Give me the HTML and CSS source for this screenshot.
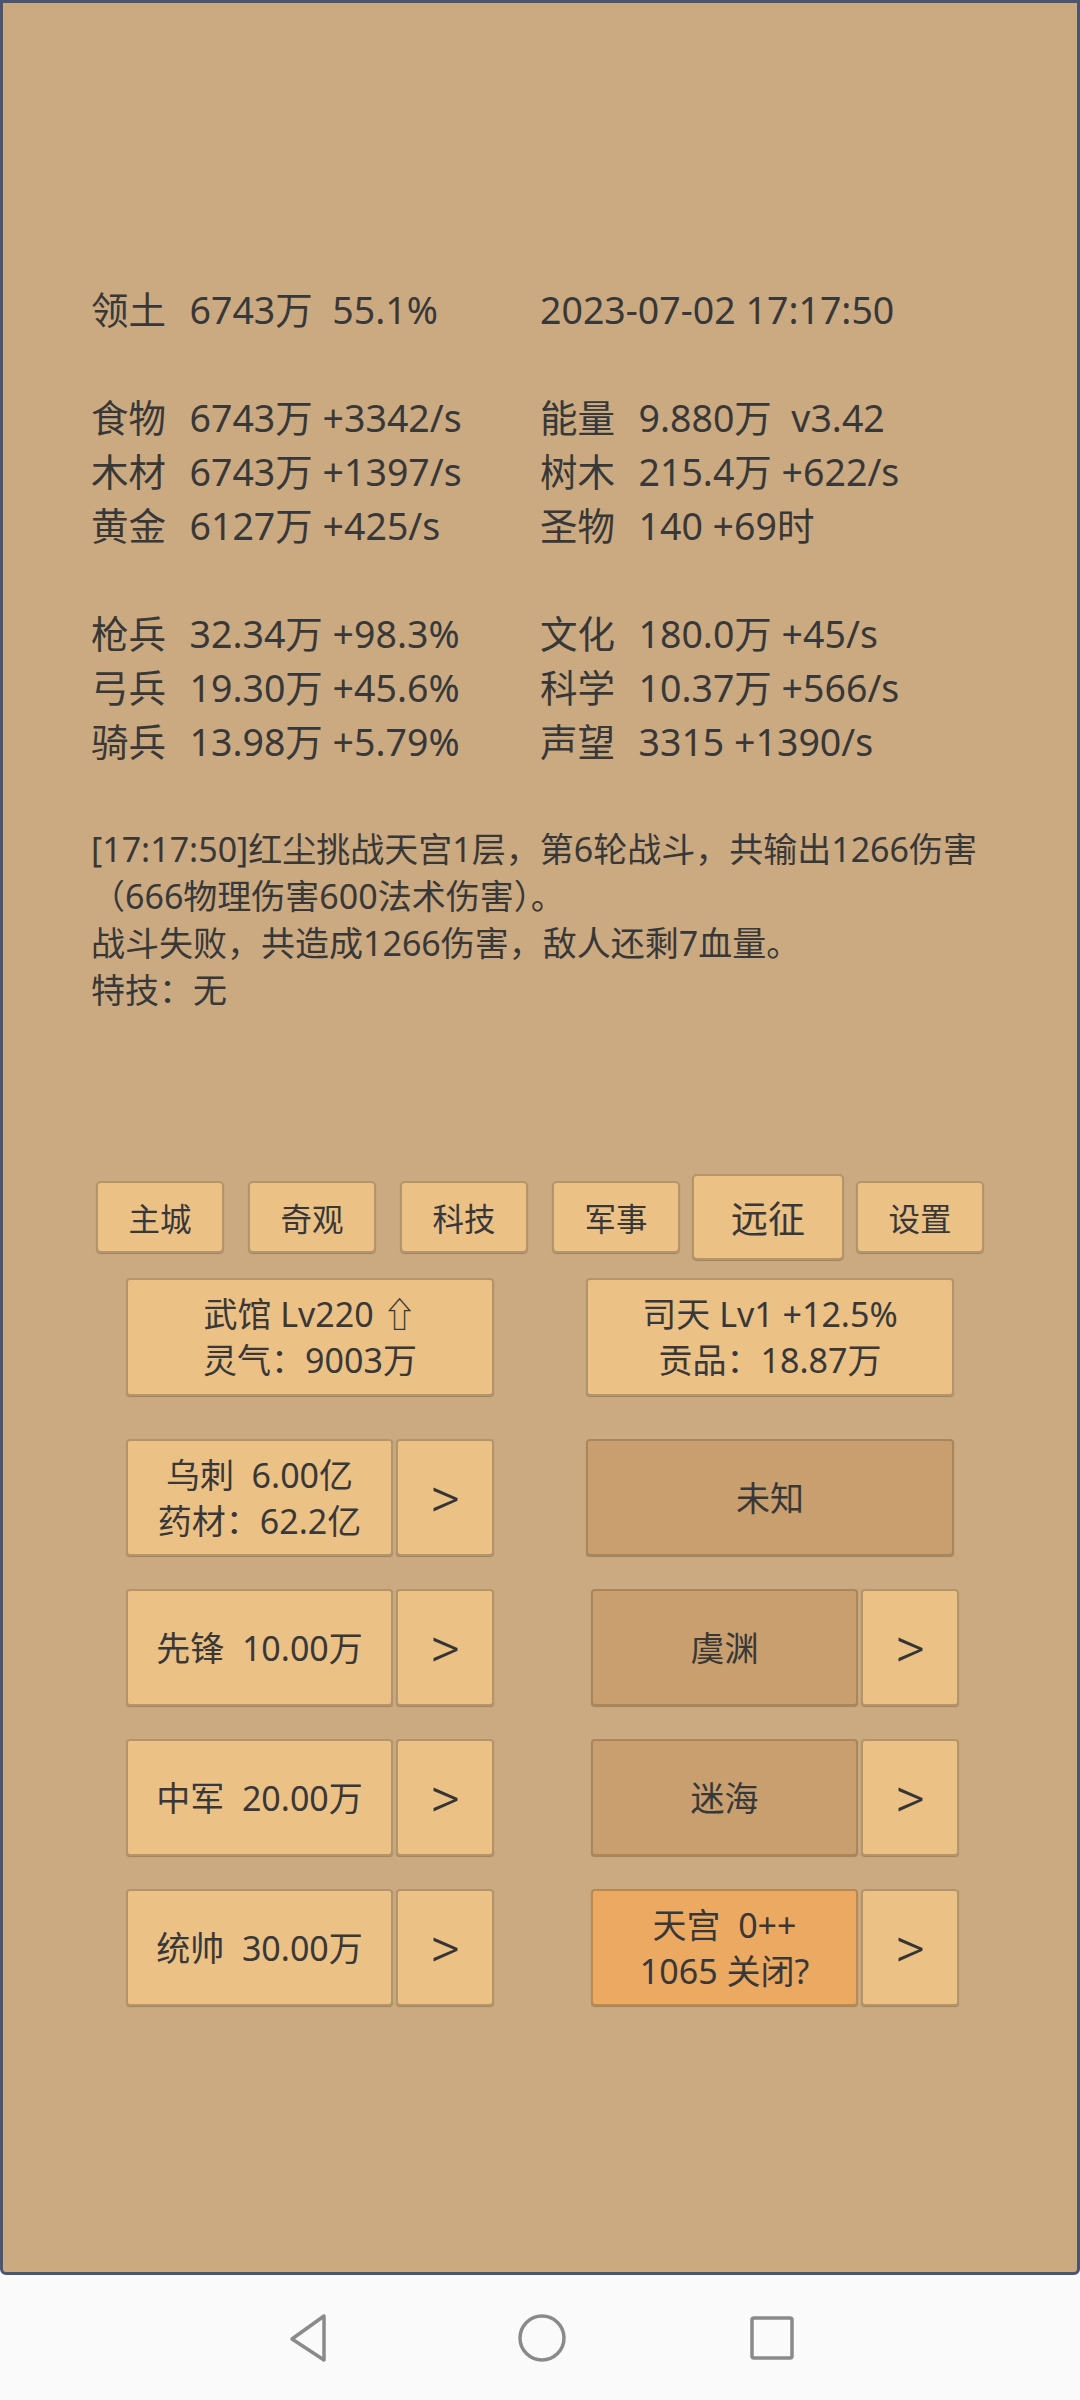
FILE: index.html
```html
<!DOCTYPE html>
<html lang="zh-CN">
<head>
<meta charset="utf-8">
<title>Game</title>
<link rel="stylesheet" href="styles.css">
</head>
<body>
<div class="screen">
  <div class="stats">
    <div class="col"><span class="lbl">领土</span>  6743万  55.1%

<span class="lbl">食物</span>  6743万 +3342/s
<span class="lbl">木材</span>  6743万 +1397/s
<span class="lbl">黄金</span>  6127万 +425/s

<span class="lbl">枪兵</span>  32.34万 +98.3%
<span class="lbl">弓兵</span>  19.30万 +45.6%
<span class="lbl">骑兵</span>  13.98万 +5.79%</div>
    <div class="col">2023-07-02 17:17:50

<span class="lbl">能量</span>  9.880万  v3.42
<span class="lbl">树木</span>  215.4万 +622/s
<span class="lbl">圣物</span>  140 +69时

<span class="lbl">文化</span>  180.0万 +45/s
<span class="lbl">科学</span>  10.37万 +566/s
<span class="lbl">声望</span>  3315 +1390/s</div>
  </div>

  <div class="log">[17:17:50]红尘挑战天宫1层，第6轮战斗，共输出1266伤害<br>（666物理伤害600法术伤害）。<br>战斗失败，共造成1266伤害，敌人还剩7血量。<br>特技：无</div>

  <div class="tabs">
    <div class="slot"><div class="tab">主城</div></div>
    <div class="slot"><div class="tab">奇观</div></div>
    <div class="slot"><div class="tab">科技</div></div>
    <div class="slot"><div class="tab">军事</div></div>
    <div class="slot"><div class="tab tab-active">远征</div></div>
    <div class="slot"><div class="tab">设置</div></div>
  </div>

  <div class="panels">
    <div class="btn panel">武馆 Lv220 ⇧<br>灵气：9003万</div>
    <div class="btn panel">司天 Lv1 +12.5%<br>贡品：18.87万</div>
  </div>

  <div class="grid">
    <div class="pair">
      <div class="btn main">乌刺  6.00亿<br>药材：62.2亿</div>
      <div class="btn arrow">&gt;</div>
    </div>
    <div class="pair">
      <div class="btn full dark">未知</div>
    </div>

    <div class="pair">
      <div class="btn main">先锋  10.00万</div>
      <div class="btn arrow">&gt;</div>
    </div>
    <div class="pair shift">
      <div class="btn main dark">虞渊</div>
      <div class="btn arrow">&gt;</div>
    </div>

    <div class="pair">
      <div class="btn main">中军  20.00万</div>
      <div class="btn arrow">&gt;</div>
    </div>
    <div class="pair shift">
      <div class="btn main dark">迷海</div>
      <div class="btn arrow">&gt;</div>
    </div>

    <div class="pair">
      <div class="btn main">统帅  30.00万</div>
      <div class="btn arrow">&gt;</div>
    </div>
    <div class="pair shift">
      <div class="btn main orange">天宫  0++<br>1065 关闭?</div>
      <div class="btn arrow">&gt;</div>
    </div>
  </div>
</div>

<div class="navbar">
  <svg class="nav-icon" width="44" height="52" viewBox="0 0 44 52">
    <path d="M38 4 L38 48 L6 27 Z" fill="none" stroke="#8a8a8a" stroke-width="3.5" stroke-linejoin="round"/>
  </svg>
  <svg class="nav-icon" width="50" height="50" viewBox="0 0 50 50">
    <circle cx="25" cy="25" r="22" fill="none" stroke="#8a8a8a" stroke-width="3.5"/>
  </svg>
  <svg class="nav-icon" width="46" height="46" viewBox="0 0 46 46">
    <rect x="3" y="3" width="40" height="40" rx="2" fill="none" stroke="#8a8a8a" stroke-width="3.5"/>
  </svg>
</div>
</body>
</html>
```

FILE: styles.css
```css
* { box-sizing: border-box; }

html, body {
  margin: 0;
  padding: 0;
  background: #fafafa;
}

body {
  width: 1080px;
  height: 2400px;
  overflow: hidden;
  font-family: "Noto Sans", "Noto Sans CJK SC", sans-serif;
  color: #383838;
}

.screen {
  width: 1080px;
  height: 2275px;
  background: #cbaa81;
  border: 3px solid #4b5570;
  border-radius: 0 0 6px 6px;
  overflow: hidden;
}

.stats {
  display: flex;
  margin: 280px 0 0 88px;
}

.col {
  white-space: pre;
  font-size: 37.5px;
  line-height: 54px;
  width: 449px;
}

.lbl {
  margin-right: 4px;
}

.log {
  margin: 57px 0 0 88px;
  font-size: 34px;
  line-height: 47px;
  white-space: nowrap;
}

.tabs {
  display: flex;
  align-items: center;
  margin: 160px 0 0 81px;
  height: 86px;
}

.slot {
  width: 152px;
  display: flex;
  justify-content: center;
}

.tab {
  width: 128px;
  height: 72px;
  display: flex;
  align-items: center;
  justify-content: center;
  font-size: 31.5px;
  background: #ebc186;
  border: 2px solid #b4956b;
  border-radius: 5px;
  box-shadow: 0 1px 1px rgba(90, 60, 30, 0.35);
}

.tab-active {
  width: 152px;
  height: 86px;
  font-size: 37px;
}

.btn {
  display: flex;
  align-items: center;
  justify-content: center;
  text-align: center;
  background: #ebc186;
  border: 2px solid #b4956b;
  border-radius: 4px;
  box-shadow: 0 1px 1px rgba(90, 60, 30, 0.35);
  font-size: 34px;
  line-height: 46px;
  white-space: pre;
}

.panels {
  display: flex;
  gap: 92px;
  margin: 18px 0 0 123px;
}

.panel {
  width: 368px;
  height: 118px;
}

.grid {
  display: grid;
  grid-template-columns: 368px 368px;
  column-gap: 92px;
  row-gap: 33px;
  margin: 43px 0 0 123px;
}

.pair {
  display: flex;
  gap: 3px;
  height: 117px;
}

.pair.shift {
  margin-left: 5px;
  width: 368px;
}

.main {
  width: 267px;
  height: 117px;
}

.arrow {
  width: 98px;
  height: 117px;
  font-family: Roboto, sans-serif;
  font-weight: 300;
  font-size: 58px;
  color: #353535;
}

.full {
  width: 368px;
  height: 117px;
}

.dark {
  background: #c99f6f;
  border-color: #a8875e;
}

.orange {
  background: #eba962;
  border-color: #b68a58;
}

.navbar {
  height: 125px;
  display: flex;
  align-items: center;
  justify-content: center;
  background: #fafafa;
}

.nav-icon {
  display: block;
}

.nav-icon:nth-child(1) { margin-right: 187px; }
.nav-icon:nth-child(2) { margin-right: 182px; }
```
